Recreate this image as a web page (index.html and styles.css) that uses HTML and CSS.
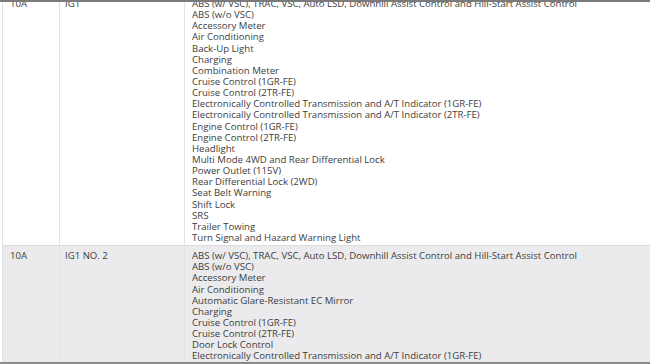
FILE: index.html
```html
<!DOCTYPE html>
<html>
<head>
<meta charset="utf-8">
<link rel="stylesheet" href="styles.css">
</head>
<body>
<div class="frame">
  <table class="fuses">
    <tr class="row">
      <td class="amp">10A</td>
      <td class="name">IG1</td>
      <td class="circuits">
        <div>ABS (w/ VSC), TRAC, VSC, Auto LSD, Downhill Assist Control and Hill-Start Assist Control</div>
        <div>ABS (w/o VSC)</div>
        <div>Accessory Meter</div>
        <div>Air Conditioning</div>
        <div>Back-Up Light</div>
        <div>Charging</div>
        <div>Combination Meter</div>
        <div>Cruise Control (1GR-FE)</div>
        <div>Cruise Control (2TR-FE)</div>
        <div>Electronically Controlled Transmission and A/T Indicator (1GR-FE)</div>
        <div>Electronically Controlled Transmission and A/T Indicator (2TR-FE)</div>
        <div>Engine Control (1GR-FE)</div>
        <div>Engine Control (2TR-FE)</div>
        <div>Headlight</div>
        <div>Multi Mode 4WD and Rear Differential Lock</div>
        <div>Power Outlet (115V)</div>
        <div>Rear Differential Lock (2WD)</div>
        <div>Seat Belt Warning</div>
        <div>Shift Lock</div>
        <div>SRS</div>
        <div>Trailer Towing</div>
        <div>Turn Signal and Hazard Warning Light</div>
      </td>
    </tr>
    <tr class="row alt">
      <td class="amp">10A</td>
      <td class="name">IG1 NO. 2</td>
      <td class="circuits">
        <div>ABS (w/ VSC), TRAC, VSC, Auto LSD, Downhill Assist Control and Hill-Start Assist Control</div>
        <div>ABS (w/o VSC)</div>
        <div>Accessory Meter</div>
        <div>Air Conditioning</div>
        <div>Automatic Glare-Resistant EC Mirror</div>
        <div>Charging</div>
        <div>Cruise Control (1GR-FE)</div>
        <div>Cruise Control (2TR-FE)</div>
        <div>Door Lock Control</div>
        <div>Electronically Controlled Transmission and A/T Indicator (1GR-FE)</div>
        <div>Electronically Controlled Transmission and A/T Indicator (2TR-FE)</div>
        <div>Engine Control (1GR-FE)</div>
      </td>
    </tr>
  </table>
</div>
</body>
</html>
```
FILE: styles.css
```css
html, body {
  margin: 0;
  padding: 0;
  background: #ffffff;
}
.frame {
  height: 360px;
  overflow: hidden;
  border-top: 2px solid #7b7b7b;
  border-bottom: 2px solid #8a8a8a;
}
.fuses {
  margin-top: -8px;
  margin-left: 2px;
  width: 648px;
  border-collapse: collapse;
  font-family: "Open Sans", sans-serif;
  font-size: 9.6px;
  line-height: 11.14px;
  color: #3d3d3d;
}
.row td {
  vertical-align: top;
  padding: 4px 6px 2px 7px;
  border-left: 1px solid #e2e2e2;
  border-bottom: 1px solid #dcdcdc;
}
.row.alt td {
  background: #ebebed;
}
.amp {
  width: 43px;
}
.name {
  width: 113px;
  padding-left: 5px !important;
}
```
